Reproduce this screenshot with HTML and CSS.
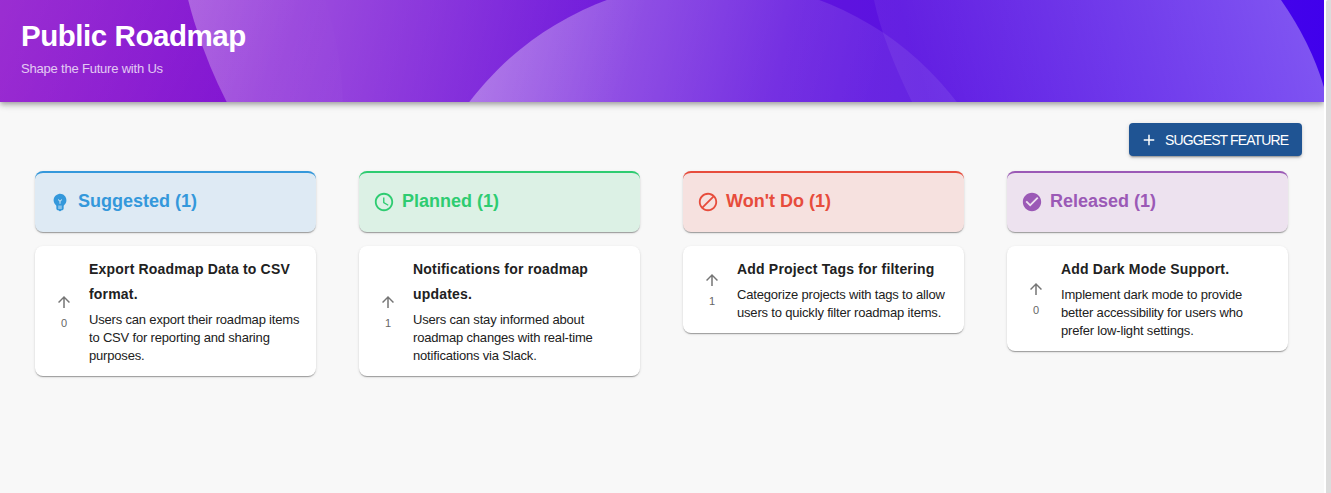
FILE: index.html
```html
<!DOCTYPE html>
<html lang="en">
<head>
<meta charset="utf-8">
<title>Public Roadmap</title>
<link rel="stylesheet" href="styles.css">
</head>
<body>
<div class="page">
  <header class="hero">
    <svg class="hero-art" viewBox="0 0 1324 102" preserveAspectRatio="none" aria-hidden="true">
      <defs>
        <linearGradient id="base" gradientUnits="userSpaceOnUse" x1="0" y1="0" x2="1324" y2="102">
          <stop offset="0" stop-color="#8e14cc"/><stop offset=".5" stop-color="#6a16dc"/><stop offset=".68" stop-color="#5a12e0"/><stop offset="1" stop-color="#4000ec"/>
        </linearGradient>
        <linearGradient id="g0" gradientUnits="userSpaceOnUse" x1="0" y1="0" x2="330" y2="160">
          <stop offset="0" stop-color="#fff" stop-opacity=".11"/><stop offset=".75" stop-color="#fff" stop-opacity="0"/><stop offset="1" stop-color="#fff" stop-opacity=".02"/>
        </linearGradient>
        <linearGradient id="g1" gradientUnits="userSpaceOnUse" x1="190" y1="0" x2="620" y2="110">
          <stop offset="0" stop-color="#fff" stop-opacity=".31"/><stop offset="1" stop-color="#fff" stop-opacity="0"/>
        </linearGradient>
        <linearGradient id="g2" gradientUnits="userSpaceOnUse" x1="480" y1="80" x2="850" y2="180">
          <stop offset="0" stop-color="#fff" stop-opacity=".35"/><stop offset=".75" stop-color="#fff" stop-opacity=".12"/><stop offset="1" stop-color="#fff" stop-opacity=".08"/>
        </linearGradient>
        <linearGradient id="g3" gradientUnits="userSpaceOnUse" x1="1300" y1="0" x2="930" y2="110">
          <stop offset="0" stop-color="#fff" stop-opacity=".33"/><stop offset="1" stop-color="#fff" stop-opacity=".06"/>
        </linearGradient>
      </defs>
      <rect width="1324" height="102" fill="url(#base)"/>
      <circle cx="-24" cy="113" r="367" fill="url(#g0)"/>
      <circle cx="663" cy="-121" r="490" fill="url(#g1)"/>
      <circle cx="713" cy="287" r="306" fill="url(#g2)"/>
      <path d="M874 0Q883 43 912 102H1324V87.300Q1311 43 1281 0Z" fill="url(#g3)"/>
    </svg>
    <div class="hero-text">
      <h1 class="hero-title">Public Roadmap</h1>
      <p class="hero-sub">Shape the Future with Us</p>
    </div>
  </header>
  <main class="content">
    <div class="toolbar">
      <button class="suggest"><svg class="plus" viewBox="0 0 24 24"><path d="M19 13h-6v6h-2v-6H5v-2h6V5h2v6h6v2z"/></svg><span>SUGGEST FEATURE</span></button>
    </div>
    <div class="board">
      <section class="column">
        <h2 class="column-head suggested"><svg class="icon" viewBox="0 0 24 24"><path d="M12 3c-.46 0-.93.04-1.4.14-2.76.53-4.96 2.76-5.48 5.52-.48 2.61.48 5.01 2.22 6.56.43.38.66.91.66 1.47V19c0 1.100.9 2 2 2h.28c.35.6.98 1 1.720 1s1.380-.4 1.720-1H14c1.100 0 2-.9 2-2v-2.310c0-.55.22-1.090.64-1.460C18.090 13.950 19 12.080 19 10c0-3.870-3.130-7-7-7zm2 16h-4v-1h4v1zm0-2h-4v-1h4v1zm-1.500-5.590V14h-1v-2.590L9.670 9.590l.71-.71L12 10.500l1.620-1.620.71.71-1.830 1.820z"/></svg><span>Suggested (1)</span></h2>
        <article class="card">
          <div class="vote"><svg class="arrow" viewBox="0 0 24 24"><path d="M4 12l1.410 1.410L11 7.830V20h2V7.830l5.580 5.590L20 12l-8-8-8 8z"/></svg><span>0</span></div>
          <div class="card-body"><h3 class="card-title">Export Roadmap Data to CSV format.</h3><p class="card-text">Users can export their roadmap items to CSV for reporting and sharing purposes.</p></div>
        </article>
      </section>
      <section class="column">
        <h2 class="column-head planned"><svg class="icon" viewBox="0 0 24 24"><path d="M11.990 2C6.470 2 2 6.480 2 12s4.470 10 9.990 10C17.520 22 22 17.520 22 12S17.520 2 11.990 2zM12 20c-4.420 0-8-3.580-8-8s3.580-8 8-8 8 3.580 8 8-3.580 8-8 8zm.5-13H11v6l5.250 3.150.75-1.230-4.500-2.670z"/></svg><span>Planned (1)</span></h2>
        <article class="card">
          <div class="vote"><svg class="arrow" viewBox="0 0 24 24"><path d="M4 12l1.410 1.410L11 7.830V20h2V7.830l5.580 5.590L20 12l-8-8-8 8z"/></svg><span>1</span></div>
          <div class="card-body"><h3 class="card-title">Notifications for roadmap updates.</h3><p class="card-text">Users can stay informed about roadmap changes with real-time notifications via Slack.</p></div>
        </article>
      </section>
      <section class="column">
        <h2 class="column-head wont"><svg class="icon" viewBox="0 0 24 24"><path d="M12 2C6.500 2 2 6.500 2 12s4.500 10 10 10 10-4.500 10-10S17.500 2 12 2zM4 12c0-4.400 3.600-8 8-8 1.800 0 3.500.6 4.900 1.700L5.700 16.900C4.600 15.500 4 13.800 4 12zm8 8c-1.800 0-3.500-.6-4.900-1.700L18.300 7.100C19.400 8.500 20 10.200 20 12c0 4.400-3.600 8-8 8z"/></svg><span>Won't Do (1)</span></h2>
        <article class="card">
          <div class="vote"><svg class="arrow" viewBox="0 0 24 24"><path d="M4 12l1.410 1.410L11 7.830V20h2V7.830l5.580 5.590L20 12l-8-8-8 8z"/></svg><span>1</span></div>
          <div class="card-body"><h3 class="card-title">Add Project Tags for filtering</h3><p class="card-text">Categorize projects with tags to allow users to quickly filter roadmap items.</p></div>
        </article>
      </section>
      <section class="column">
        <h2 class="column-head released"><svg class="icon" viewBox="0 0 24 24"><path d="M12 2C6.480 2 2 6.480 2 12s4.480 10 10 10 10-4.480 10-10S17.520 2 12 2zm-2 15l-5-5 1.410-1.410L10 14.170l7.590-7.590L19 8l-9 9z"/></svg><span>Released (1)</span></h2>
        <article class="card">
          <div class="vote"><svg class="arrow" viewBox="0 0 24 24"><path d="M4 12l1.410 1.410L11 7.830V20h2V7.830l5.580 5.590L20 12l-8-8-8 8z"/></svg><span>0</span></div>
          <div class="card-body"><h3 class="card-title">Add Dark Mode Support.</h3><p class="card-text">Implement dark mode to provide better accessibility for users who prefer low-light settings.</p></div>
        </article>
      </section>
    </div>
  </main>
</div>
<div class="scroll-edge"></div>
</body>
</html>
```
FILE: styles.css
```css
* { box-sizing: border-box; }
body {
  margin: 0;
  height: 493px;
  display: flex;
  overflow: hidden;
  background: #fff;
  color: #212121;
  font-family: "Liberation Sans", Arial, sans-serif;
}
h1, h2, h3, p { margin: 0; }
svg { fill: currentColor; flex: none; }
.page { width: 1324px; background: #f8f8f8; overflow: hidden; }
.scroll-edge { width: 5px; margin-left: 2px; background: #dcdcdc; border-top-left-radius: 2px; }
.hero {
  position: relative;
  height: 102px;
  box-shadow: 0 2px 4px -1px rgba(0,0,0,.2), 0 4px 5px rgba(0,0,0,.14), 0 1px 10px rgba(0,0,0,.12);
}
.hero-art { position: absolute; inset: 0; width: 100%; height: 100%; }
.hero-text { position: relative; padding: 18px 21px; color: #fff; }
.hero-title { font-size: 29.5px; line-height: 36px; font-weight: 700; letter-spacing: -.45px; }
.hero-sub { margin-top: 6px; font-size: 13px; line-height: 18px; letter-spacing: -.2px; opacity: .75; }
.content { padding: 21px 22px 0 35px; }
.toolbar { display: flex; justify-content: flex-end; }
.suggest {
  display: flex;
  align-items: center;
  gap: 7px;
  width: 173px;
  height: 33px;
  padding: 0 0 0 11px;
  border: 0;
  border-radius: 4px;
  background: #1f5493;
  color: #fff;
  font: 14px/24px "Liberation Sans", Arial, sans-serif;
  letter-spacing: -.88px;
  white-space: nowrap;
  box-shadow: 0 3px 1px -2px rgba(0,0,0,.2), 0 2px 2px rgba(0,0,0,.14), 0 1px 5px rgba(0,0,0,.12);
}
.plus { width: 18px; height: 18px; }
.board { display: grid; grid-template-columns: repeat(4, 281px); gap: 43px; margin-top: 15px; align-items: start; }
.column { display: flex; flex-direction: column; gap: 14px; }
.column-head, .card {
  border-radius: 8px;
  box-shadow: 0 2px 1px -1px rgba(0,0,0,.2), 0 1px 1px rgba(0,0,0,.14), 0 1px 3px rgba(0,0,0,.12);
}
.column-head {
  display: flex;
  align-items: center;
  gap: 7px;
  height: 61px;
  padding: 0 0 2px 14px;
  border-top: 2px solid currentColor;
  font-size: 18px;
  line-height: 24px;
  font-weight: 700;
}
.icon { width: 22px; height: 22px; }
.column-head span { margin-top: -1px; }
.suggested { color: #3498db; background: #deeaf4; }
.planned { color: #2ecc71; background: #dcf1e5; }
.wont { color: #e74c3c; background: #f6e1df; }
.released { color: #9b59b6; background: #ede2ef; }
.card { display: flex; align-items: center; padding: 11px 11px 11px 20px; background: #fff; }
.vote { width: 18px; margin-right: 16px; padding-top: 2px; display: flex; flex-direction: column; align-items: center; gap: 3px; color: #666; font-size: 11px; line-height: 18px; letter-spacing: -.2px; }
.arrow { width: 18px; height: 18px; color: #757575; }
.card-body { flex: 1; }
.card-title { font-size: 14px; line-height: 25px; font-weight: 700; letter-spacing: .19px; }
.card-text { margin-top: 4px; font-size: 13px; line-height: 18px; letter-spacing: -.18px; }
```
